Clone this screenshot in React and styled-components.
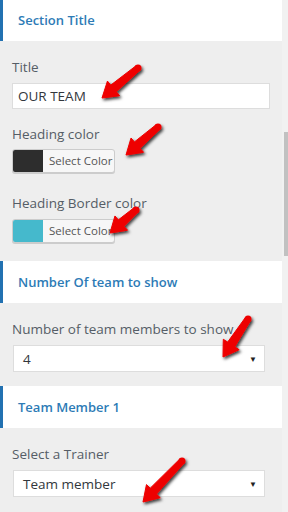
import React from "react";
import styled, { createGlobalStyle } from "styled-components";

const GlobalStyle = createGlobalStyle`
	html, body {
		margin: 0;
		padding: 0;
		height: 512px;
		overflow: hidden;
		background: #eeeeee;
	}
	body {
		font-family: "Open Sans", "Noto Sans", sans-serif;
	}
`;

const Page = styled.div`
	position: relative;
	display: flex;
	width: 288px;
	height: 512px;
	overflow: hidden;
`;

const Panel = styled.div`
	width: 282px;
	margin-top: -1px;
	background: #eeeeee;
`;

const Track = styled.div`
	width: 6px;
	background: #f1f1f1;
`;

const Thumb = styled.div`
	width: 4px;
	height: 124px;
	margin: 132px 0 0 2px;
	background: #c1c1c1;
`;

const SectionHeader = styled.h3`
	margin: 0;
	height: 42px;
	line-height: 42px;
	padding-left: 15px;
	background: #ffffff;
	border-left: 3px solid #2271b1;
	color: #2d7bb6;
	font-size: 13px;
	font-weight: 600;
`;

const SectionBody = styled.div`
	padding: 16px 0 ${(p) => p.$bottom || 18}px 12px;
`;

const Field = styled.div`
	margin-bottom: ${(p) => p.$gap || 0}px;
`;

const Label = styled.div`
	font-size: 13.5px;
	line-height: 20px;
	color: #555d66;
	margin-bottom: ${(p) => p.$gap || 6}px;
`;

const TextInput = styled.div`
	box-sizing: border-box;
	width: 258px;
	height: 26px;
	padding-left: 5px;
	background: #ffffff;
	border: 1px solid #dddddd;
	font-size: 13.5px;
	line-height: 24px;
	color: #32373c;
`;

const ColorButton = styled.div`
	box-sizing: border-box;
	display: flex;
	width: 103px;
	height: 24px;
	border: 1px solid #cccccc;
	border-radius: 3px;
	overflow: hidden;
	background: #f7f7f7;
	box-shadow: 0 1px 0 #cccccc;
`;

const Swatch = styled.span`
	width: 30px;
	background: ${(p) => p.$color};
`;

const ButtonText = styled.span`
	flex: 1;
	padding-left: 6px;
	font-size: 11.5px;
	line-height: 22px;
	color: #555555;
`;

const SelectBox = styled.div`
	box-sizing: border-box;
	display: flex;
	align-items: center;
	justify-content: space-between;
	width: 252px;
	height: 27px;
	margin-left: 1px;
	padding: 0 7px 0 9px;
	background: #ffffff;
	border: 1px solid #dddddd;
	font-size: 13.5px;
	color: #32373c;
`;

const Caret = styled.span`
	font-size: 8px;
	color: #222222;
`;

const Overlay = styled.svg`
	position: absolute;
	left: 0;
	top: 0;
	pointer-events: none;
`;

const arrows = [
	{ from: [138, 68], to: [102, 98] },
	{ from: [158, 127], to: [126, 155] },
	{ from: [136, 210], to: [110, 233] },
	{ from: [248, 319], to: [223, 357] },
	{ from: [182, 461], to: [143, 502] },
];

const arrowPoints = ({ from, to }) => {
	const dx = to[0] - from[0];
	const dy = to[1] - from[1];
	const len = Math.hypot(dx, dy);
	const ux = dx / len;
	const uy = dy / len;
	const nx = -uy;
	const ny = ux;
	const neck = [to[0] - ux * 15, to[1] - uy * 15];
	const pt = (b, w) => `${b[0] + nx * w},${b[1] + ny * w}`;
	return [
		pt(from, 3),
		pt(neck, 4.3),
		pt(neck, 9.5),
		`${to[0]},${to[1]}`,
		pt(neck, -9.5),
		pt(neck, -4.3),
		pt(from, -3),
	].join(" ");
};

const Arrows = () => (
	<Overlay width="288" height="512">
		<defs>
			<filter id="shade" x="-50%" y="-50%" width="200%" height="200%">
				<feDropShadow dx="1.5" dy="2" stdDeviation="1.5" floodColor="#000" floodOpacity="0.75" />
			</filter>
		</defs>
		{arrows.map((a, i) => (
			<g key={i} filter="url(#shade)" fill="#ee0000">
				<polygon points={arrowPoints(a)} strokeLinejoin="round" stroke="#ee0000" strokeWidth="1" />
				<circle cx={a.from[0]} cy={a.from[1]} r="3.5" />
			</g>
		))}
	</Overlay>
);

export default function App() {
	return (
		<Page>
			<GlobalStyle />
			<Panel>
				<SectionHeader>Section Title</SectionHeader>
				<SectionBody $bottom={18}>
					<Field $gap={15}>
						<Label>Title</Label>
						<TextInput>OUR TEAM</TextInput>
					</Field>
					<Field $gap={20}>
						<Label $gap={5}>Heading color</Label>
						<ColorButton>
							<Swatch $color="#2d2d2d" />
							<ButtonText>Select Color</ButtonText>
						</ColorButton>
					</Field>
					<Field>
						<Label>Heading Border color</Label>
						<ColorButton>
							<Swatch $color="#45b9cc" />
							<ButtonText>Select Color</ButtonText>
						</ColorButton>
					</Field>
				</SectionBody>

				<SectionHeader>Number Of team to show</SectionHeader>
				<SectionBody $bottom={14}>
					<Label>Number of team members to show</Label>
					<SelectBox>
						<span>4</span>
						<Caret>▼</Caret>
					</SelectBox>
				</SectionBody>

				<SectionHeader>Team Member 1</SectionHeader>
				<SectionBody>
					<Label>Select a Trainer</Label>
					<SelectBox>
						<span>Team member</span>
						<Caret>▼</Caret>
					</SelectBox>
				</SectionBody>
			</Panel>
			<Track>
				<Thumb />
			</Track>
			<Arrows />
		</Page>
	);
}
